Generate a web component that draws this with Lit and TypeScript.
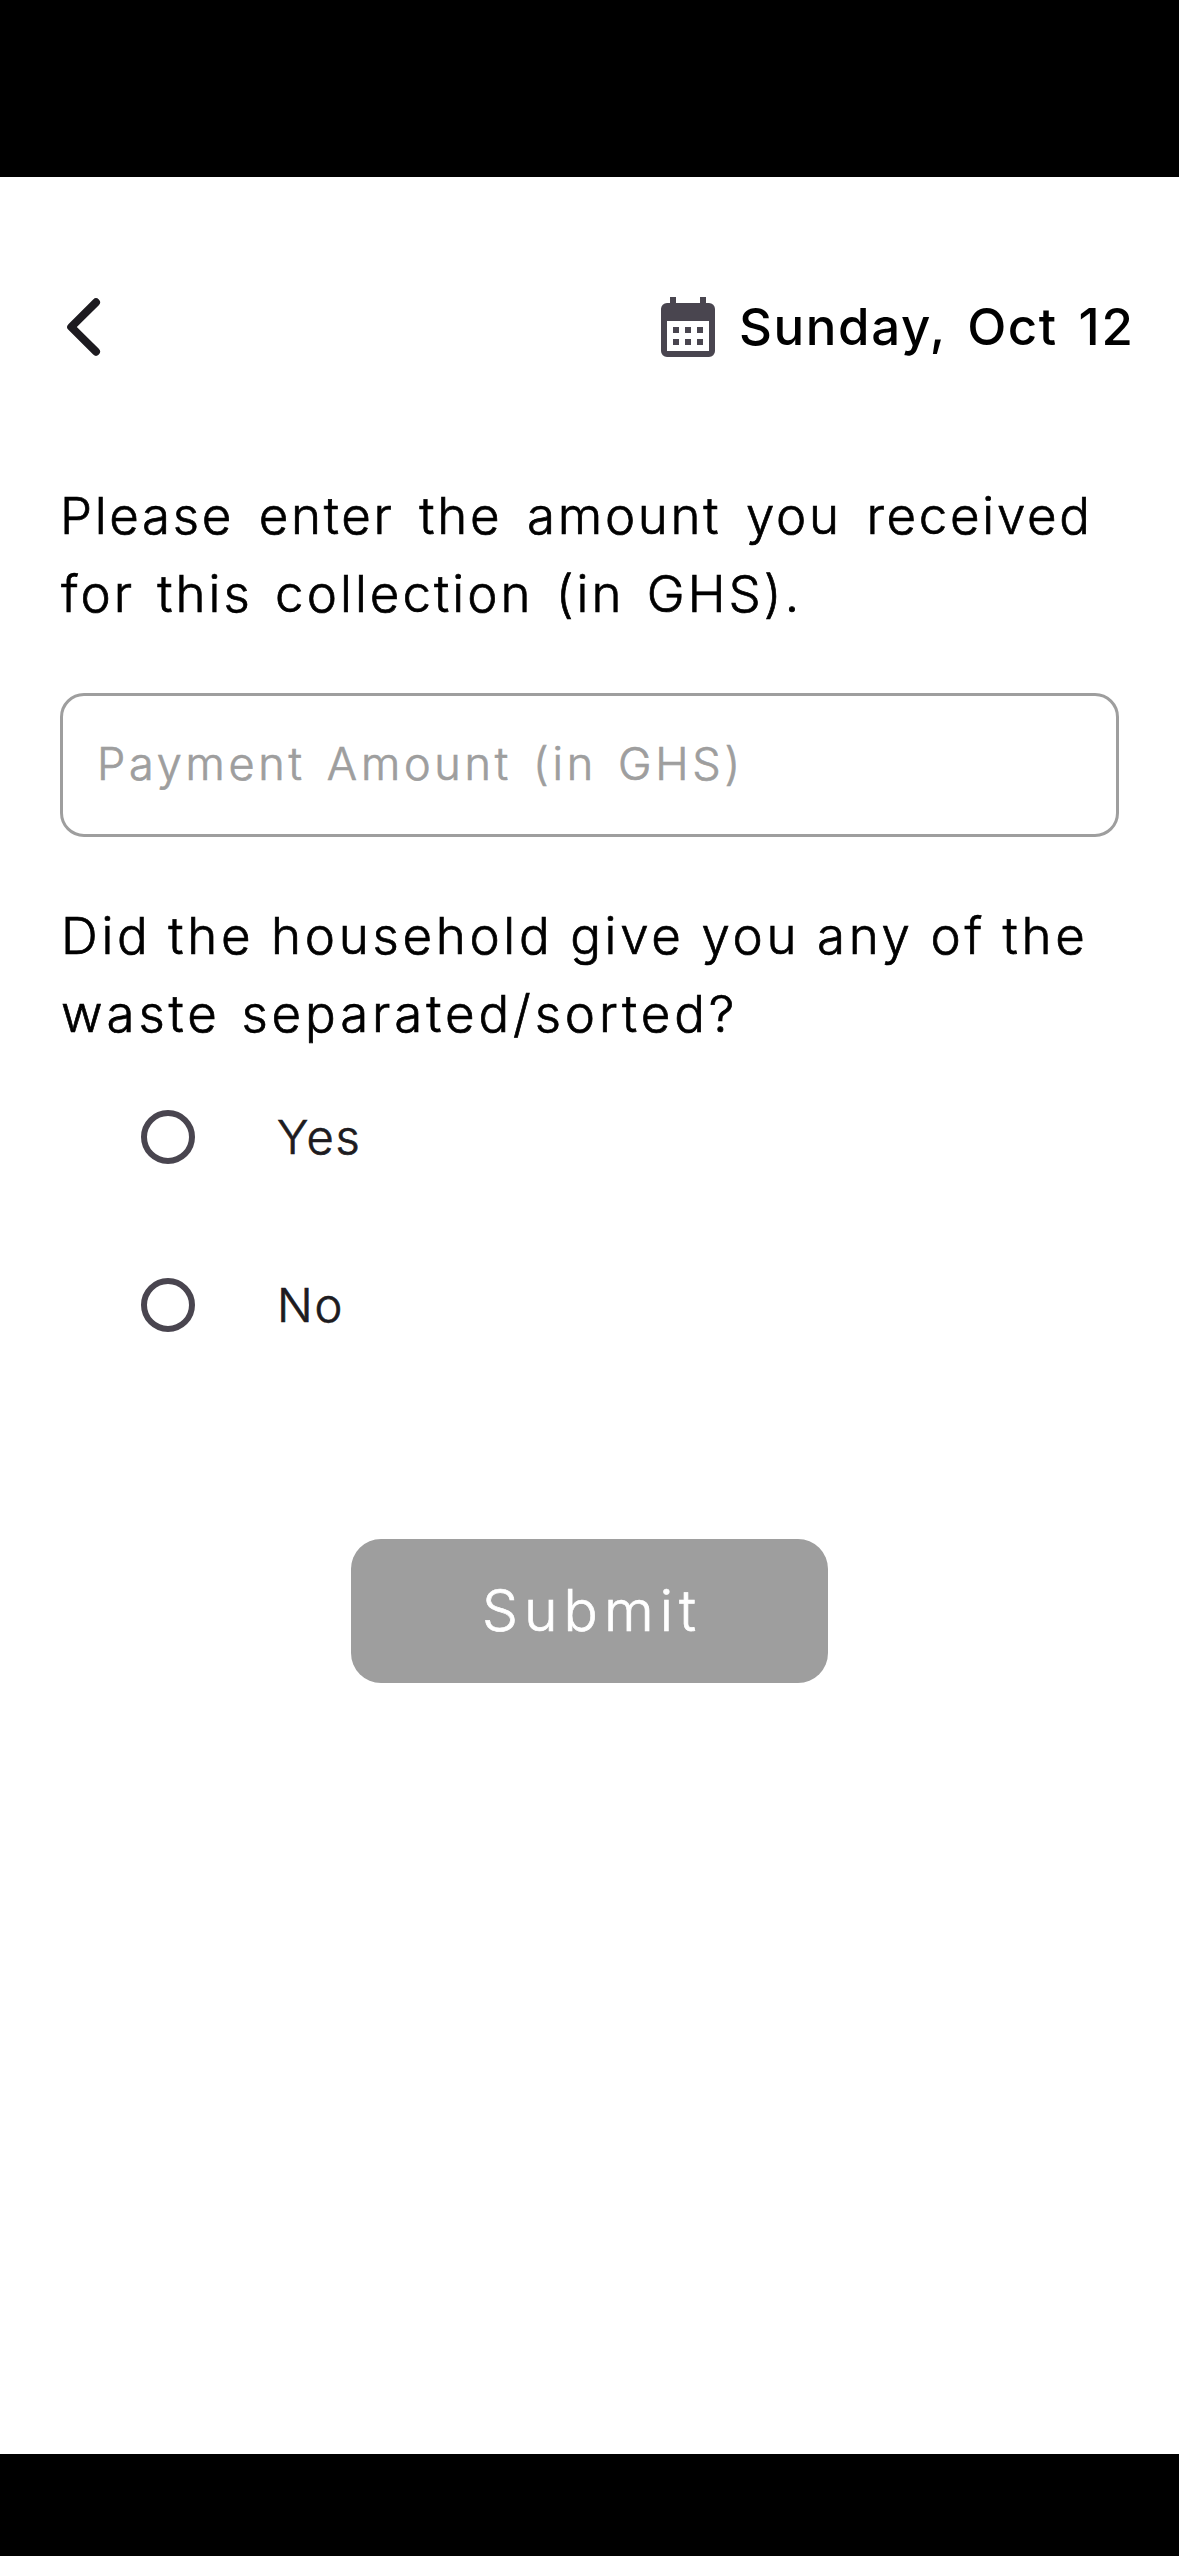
import { LitElement, html, css } from "lit";
import { customElement, property, state } from "lit/decorators.js";
import { classMap } from "lit/directives/class-map.js";

@customElement("radio-option")
export class RadioOption extends LitElement {
  @property() label = "";
  @property({ type: Boolean }) checked = false;

  static styles = css`
    :host {
      display: flex;
      align-items: center;
      height: 168px;
      padding-left: 141px;
      gap: 82px;
      color: #1d1b20;
      cursor: pointer;
    }
    .ring {
      box-sizing: border-box;
      width: 54px;
      height: 54px;
      border: 6px solid #49454f;
      border-radius: 50%;
      display: grid;
      place-items: center;
    }
    .ring.on::after {
      content: "";
      width: 27px;
      height: 27px;
      border-radius: 50%;
      background: #49454f;
    }
    .label {
      font-size: 47px;
      font-weight: 300;
      line-height: 60px;
      letter-spacing: 1.8px;
      -webkit-text-stroke: 0.7px currentColor;
    }
  `;

  render() {
    return html`
      <span class=${classMap({ ring: true, on: this.checked })}></span>
      <span class="label">${this.label}</span>
    `;
  }
}

@customElement("app-root")
export class AppRoot extends LitElement {
  @state() private answer = "";

  static styles = css`
    :host {
      display: flex;
      flex-direction: column;
      width: 1179px;
      height: 2556px;
      background: #fff;
      color: #000;
      font-family: Inter, "Liberation Sans", sans-serif;
    }
    .status {
      height: 177px;
      background: #000;
    }
    .nav {
      height: 102px;
      background: #000;
    }
    .page {
      flex: 1;
      display: flex;
      flex-direction: column;
    }
    .header {
      display: flex;
      align-items: center;
      justify-content: space-between;
      height: 300px;
      padding: 0 44px 0 60px;
    }
    .back {
      width: 48px;
      height: 66px;
    }
    .date {
      display: flex;
      align-items: center;
      gap: 15px;
    }
    .calendar {
      width: 72px;
      height: 72px;
    }
    .day {
      width: 396px;
      font-size: 51px;
      font-weight: 500;
      line-height: 78px;
      letter-spacing: 1.6px;
      word-spacing: 5.6px;
      white-space: nowrap;
    }
    .question {
      display: flex;
      flex-direction: column;
      padding-left: 59px;
      font-size: 51px;
      font-weight: 300;
      line-height: 78px;
      white-space: nowrap;
      -webkit-text-stroke: 0.7px currentColor;
    }
    .l1 {
      padding-left: 1px;
      letter-spacing: 2.7px;
      word-spacing: 7.7px;
    }
    .l2 {
      padding-left: 2px;
      letter-spacing: 3.05px;
      word-spacing: 4.8px;
    }
    .l3 {
      padding-left: 2px;
      letter-spacing: 3.7px;
      word-spacing: -1.2px;
    }
    .l4 {
      padding-left: 2px;
      letter-spacing: 3.9px;
      word-spacing: 2.4px;
    }
    .field {
      box-sizing: border-box;
      display: flex;
      align-items: center;
      height: 144px;
      margin: 60px;
      padding: 0 0 3px 34px;
      border: 3px solid #9e9e9e;
      border-radius: 24px;
      color: #9e9e9e;
      font-size: 45px;
      font-weight: 300;
      letter-spacing: 3.75px;
      word-spacing: 4.65px;
      white-space: nowrap;
      -webkit-text-stroke: 0.7px currentColor;
    }
    .submit {
      align-self: center;
      box-sizing: border-box;
      width: 477px;
      height: 144px;
      margin-top: 150px;
      padding: 0 0 2px 5px;
      border: 0;
      border-radius: 30px;
      background: #9e9e9e;
      color: #fff;
      font-family: inherit;
      font-size: 57px;
      font-weight: 300;
      letter-spacing: 6px;
      -webkit-text-stroke: 0.7px currentColor;
    }
  `;

  render() {
    return html`
      <div class="status"></div>
      <main class="page">
        <header class="header">
          <svg class="back" viewBox="0 0 48 66">
            <path
              d="M36 8.3 11.2 33 36 57.7"
              fill="none"
              stroke="#1d1b20"
              stroke-width="8"
              stroke-linecap="round"
              stroke-linejoin="round"
            />
          </svg>
          <div class="date">
            <svg class="calendar" viewBox="0 0 24 24">
              <path
                fill="#49454f"
                fill-rule="evenodd"
                d="M6 2h2v2h8V2h2v2h1a2 2 0 0 1 2 2v14a2 2 0 0 1-2 2H5a2 2 0 0 1-2-2V6a2 2 0 0 1 2-2h1zM5 10v10h14V10zM7 12h2v2H7zM11 12h2v2h-2zM15 12h2v2h-2zM7 16h2v2H7zM11 16h2v2h-2zM15 16h2v2h-2z"
              />
            </svg>
            <span class="day">Sunday, Oct 12</span>
          </div>
        </header>

        <div class="question">
          <span class="l1">Please enter the amount you received</span>
          <span class="l2">for this collection (in GHS).</span>
        </div>
        <div class="field">Payment Amount (in GHS)</div>

        <div class="question">
          <span class="l3">Did the household give you any of the</span>
          <span class="l4">waste separated/sorted?</span>
        </div>
        ${["Yes", "No"].map(
          (label) => html`<radio-option
            .label=${label}
            .checked=${this.answer === label}
            @click=${() => (this.answer = label)}
          ></radio-option>`
        )}

        <button class="submit">Submit</button>
      </main>
      <div class="nav"></div>
    `;
  }
}
